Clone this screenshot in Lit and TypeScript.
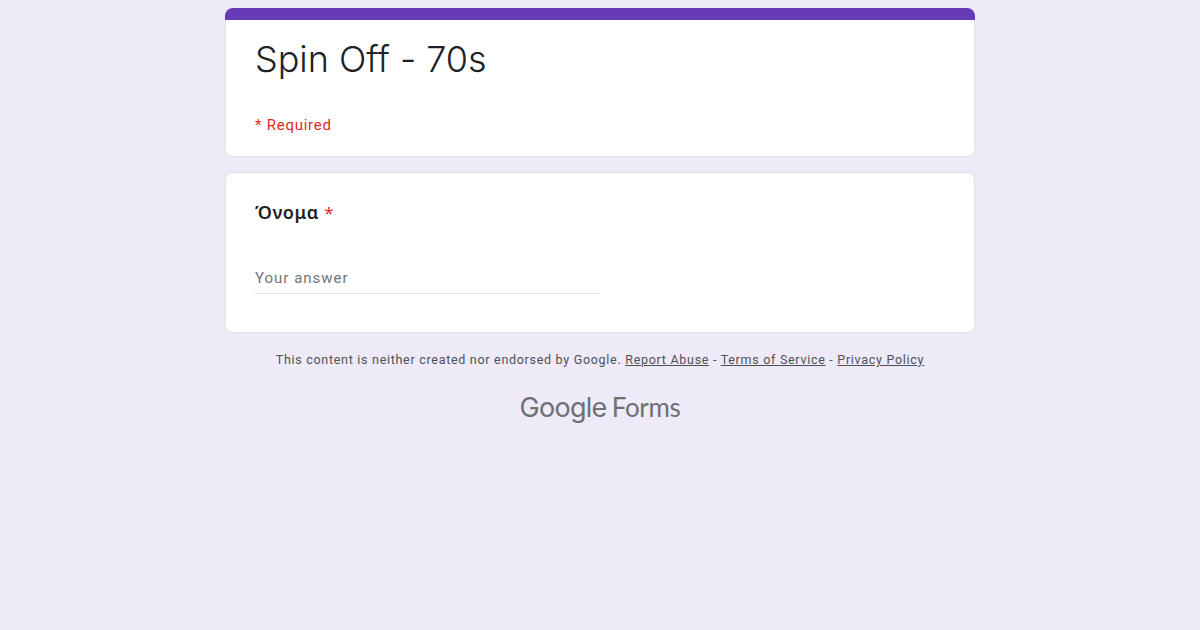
import { LitElement, html, css } from "lit";
import { customElement } from "lit/decorators.js";

@customElement("app-root")
export class AppRoot extends LitElement {
  static styles = css`
    :host { display: block; min-height: 630px; background: #eeeaf8; font-family: Roboto, sans-serif; overflow: hidden; }
    .wrap { width: 750px; margin: 0 auto; padding-top: 8px; display: flex; flex-direction: column; }
    .card { background: #fff; border: 1px solid #e2dfea; border-radius: 8px; box-sizing: border-box; }
    .head { border-radius: 8px; overflow: hidden; margin-bottom: 15px; }
    .bar { height: 12px; background: #673ab7; }
    .head-body { height: 137px; border-top: none; border-radius: 0 0 8px 8px; padding: 0 30px 0 29px; }
    h1 { margin: 0; padding-top: 17px; font: 300 36px/44px Inter, Roboto, sans-serif; letter-spacing: -.05px; color: #202124; }
    .req { margin-top: 34px; font-size: 15px; line-height: 20px; letter-spacing: .75px; color: #e02a20; }
    .q { height: 161px; padding: 27px 29px 0; }
    .label { font: 600 18px/24px "Noto Sans", Roboto, sans-serif; letter-spacing: .6px; color: #202124; }
    .label span { color: #e02a20; font-weight: 400; font-size: 17px; letter-spacing: 0; }
    .input { width: 345px; margin-top: 39px; height: 30px; border-bottom: 1px solid #e2e2e6; box-sizing: border-box; font-size: 15px; line-height: 28px; letter-spacing: 1px; color: #70757a; }
    .foot { margin-top: 19px; text-align: center; font-size: 12.5px; line-height: 16px; letter-spacing: .71px; color: #4d5156; }
    .foot a { color: #4d5156; text-decoration: underline; }
    .brand { margin-top: 23px; display: flex; justify-content: center; align-items: baseline; gap: 5px; color: #6f7074; font-family: Lato, sans-serif; }
    .g { font-size: 27px; letter-spacing: -.7px; font-family: Inter, sans-serif; }
    .f { font-size: 26px; font-weight: 400; letter-spacing: -.3px; }
  `;
  render() {
    return html`<div class="wrap">
      <div class="head"><div class="bar"></div><div class="card head-body"><h1>Spin Off - 70s</h1><div class="req">* Required</div></div></div>
      <div class="card q"><div class="label">Όνομα <span>*</span></div><div class="input">Your answer</div></div>
      <div class="foot">This content is neither created nor endorsed by Google. <a>Report Abuse</a> - <a>Terms of Service</a> - <a>Privacy Policy</a></div>
      <div class="brand"><span class="g">Google</span><span class="f">Forms</span></div>
    </div>`;
  }
}
